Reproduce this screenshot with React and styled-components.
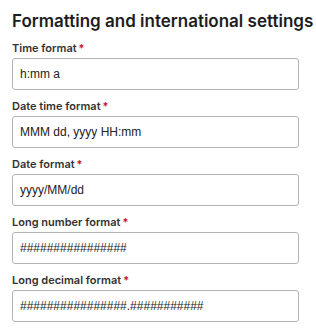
import React from 'react';
import styled, { createGlobalStyle } from 'styled-components';

const GlobalStyle = createGlobalStyle`
  body {
    margin: 0;
    background: #fff;
    font-family: Inter, "Noto Sans", sans-serif;
  }
`;

const fields = [
  { label: 'Time format', value: 'h:mm a' },
  { label: 'Date time format', value: 'MMM dd, yyyy HH:mm' },
  { label: 'Date format', value: 'yyyy/MM/dd' },
  { label: 'Long number format', value: '################' },
  { label: 'Long decimal format', value: '################.###########' },
];

function App() {
  return (
    <>
      <GlobalStyle />
      <Panel>
        <Title>Formatting and international settings</Title>
        {fields.map((field) => (
          <Field key={field.label}>
            <Label>
              {field.label}
              <Required>*</Required>
            </Label>
            <Input defaultValue={field.value} readOnly />
          </Field>
        ))}
      </Panel>
    </>
  );
}

const Panel = styled.div`
  display: flex;
  flex-direction: column;
  width: 287px;
  padding: 10px 17px 0 12px;
`;

const Title = styled.h2`
  margin: 0;
  font-size: 17px;
  line-height: 22px;
  font-weight: 600;
  color: #1d1d1f;
  white-space: nowrap;
`;

const Field = styled.div`
  display: flex;
  flex-direction: column;
  margin-top: 8px;
`;

const Label = styled.label`
  font-size: 11px;
  line-height: 16px;
  font-weight: 600;
  color: #333;
  margin-bottom: 2px;
`;

const Required = styled.span`
  color: #c8102e;
  margin-left: 2px;
`;

const Input = styled.input`
  box-sizing: border-box;
  width: 100%;
  height: 32px;
  padding: 0 7px;
  border: 1px solid #b4b4b4;
  border-radius: 3px;
  font-family: "Liberation Sans", Arial, sans-serif;
  font-size: 12px;
  color: #222;
  background: #fff;
  outline: none;
`;

export default App;
